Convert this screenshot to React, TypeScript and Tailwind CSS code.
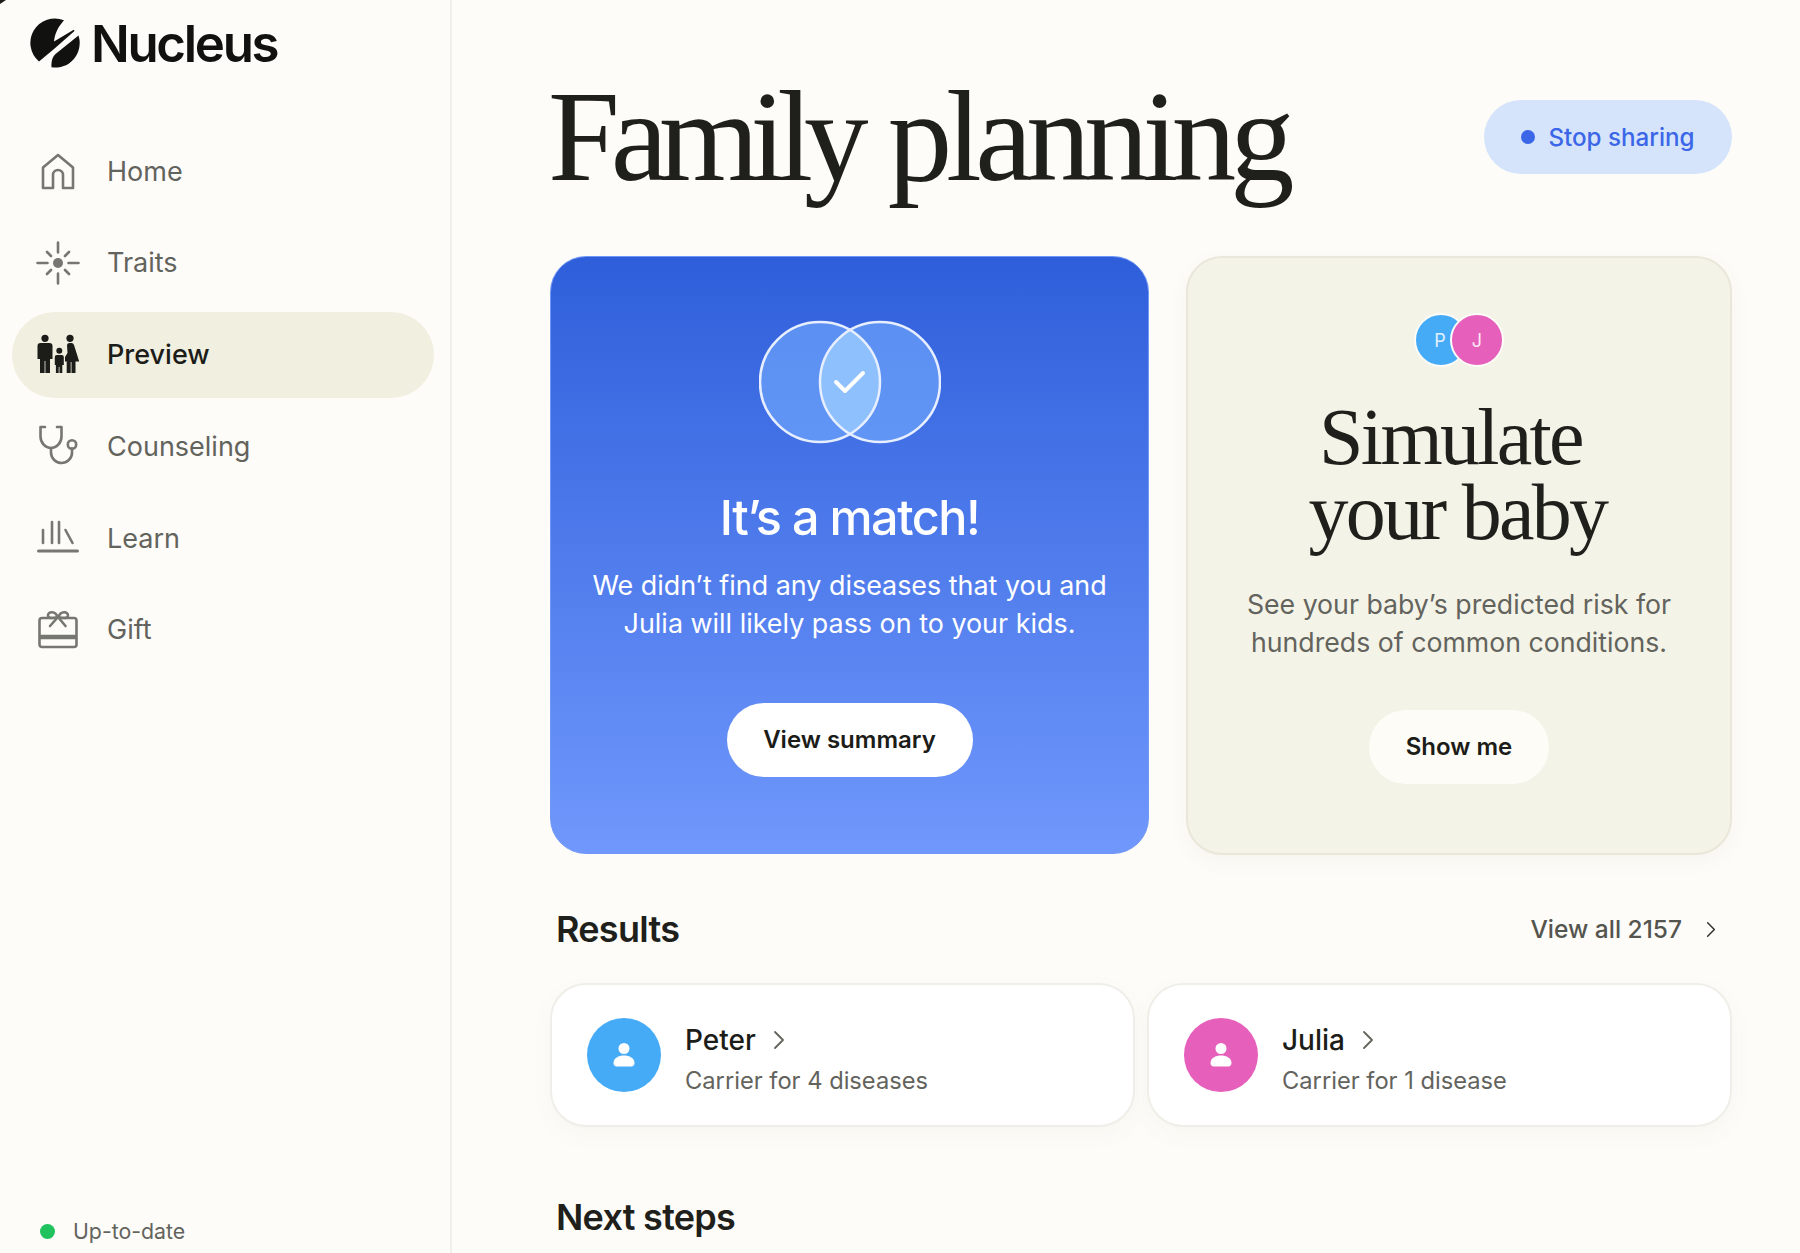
import type { ReactNode } from "react";

const stroke = {
  fill: "none",
  stroke: "currentColor",
  strokeWidth: 2.6,
  strokeLinecap: "round" as const,
  strokeLinejoin: "round" as const,
};

function HomeIcon() {
  return (
    <svg width="44" height="44" viewBox="0 0 44 44" {...stroke}>
      <path d="M7 39V18.500L22 6l15 12.500V39H27V26a5 5 0 0 0-10 0v13Z" />
    </svg>
  );
}

function TraitsIcon() {
  return (
    <svg width="44" height="44" viewBox="0 0 44 44" {...stroke}>
      <circle cx="22" cy="22" r="5" fill="currentColor" stroke="none" />
      <path d="M22 1.500v10M22 32.500v10M1.500 22h10M32.500 22h10M11 11l4 4M33 11l-4 4M11 33l4-4M33 33l-4-4" />
    </svg>
  );
}

function PreviewIcon() {
  return (
    <svg width="44" height="44" viewBox="0 0 44 44" fill="currentColor">
      <circle cx="9" cy="5.300" r="3.600" />
      <circle cx="34" cy="5.300" r="3.600" />
      <circle cx="23.300" cy="17.700" r="3" />
      <path d="M1.500 13a3 3 0 0 1 3-3h9a3 3 0 0 1 3 3v13h-2.500v14H9.400V28h-.8v12H4V26H1.500Z" />
      <path d="M18.800 24a2 2 0 0 1 2-2h5a2 2 0 0 1 2 2v8h-1.500v8h-2.800v-6h-.8v6h-2.800v-8h-1.100Z" />
      <path d="M31 12a2.500 2.500 0 0 1 2.500-2h2a3 3 0 0 1 2.500 2l5.200 16.500h-3.700V40h-4V29h-.8v11h-4V28.500H29V24l2.500-4Z" />
    </svg>
  );
}

function CounselingIcon() {
  return (
    <svg width="44" height="44" viewBox="0 0 44 44" {...stroke}>
      <path d="M9 3H4.500v9.500C4.500 19 9.500 24 15 24s10.500-5 10.500-11.500V3H21" />
      <path d="M15 24v4.500C15 34.500 20 39 25.500 39S36 34.500 36 29v-4.500" />
      <circle cx="36" cy="20.500" r="4.200" />
    </svg>
  );
}

function LearnIcon() {
  return (
    <svg width="44" height="44" viewBox="0 0 44 44" {...stroke}>
      <path d="M7 14v13M16 6v21M23 6v21M29.500 14l7 13" />
      <path d="M2.500 35h39" strokeWidth="3" />
    </svg>
  );
}

function GiftIcon() {
  return (
    <svg width="44" height="44" viewBox="0 0 44 44" {...stroke}>
      <rect x="3.500" y="10" width="37" height="29" rx="2.500" />
      <path d="M3.500 29h37" strokeWidth="4.500" strokeLinecap="butt" />
      <path d="M14 18l8-9 7.500 9M21.500 9c-2-6-9.500-6-9.500-1.500 0 3 4 2.800 9.500 1.500M22.500 9c2-6 9.500-6 9.500-1.500 0 3-4 2.800-9.500 1.500" fill="#fdfcf8" />
    </svg>
  );
}

function NavItem({ icon, label, active }: { icon: ReactNode; label: string; active?: boolean }) {
  return (
    <div
      className={`flex h-[86px] items-center rounded-full pl-[24px] ${active ? "bg-[#f0efe0] font-medium text-[#1c1c18]" : "text-[#63635d]"}`}
    >
      <span className={`flex w-[71px] shrink-0 ${active ? "" : "text-[#777771]"}`}>{icon}</span>
      <span className="text-[27px] leading-none">{label}</span>
    </div>
  );
}

function Chevron({ className }: { className: string }) {
  return (
    <svg className={className} viewBox="0 0 12 20" fill="none" stroke="currentColor" strokeWidth="1.800" strokeLinecap="round" strokeLinejoin="round">
      <path d="M2 2l8 8-8 8" />
    </svg>
  );
}

function PersonCard({ name, note, color }: { name: string; note: string; color: string }) {
  return (
    <div className="flex h-[144px] flex-1 items-center rounded-[36px] border-2 border-[#efeee8] bg-white pl-[35px] shadow-[0_8px_24px_rgba(90,90,70,0.04)]">
      <div className={`flex h-[74px] w-[74px] items-center justify-center rounded-full ${color}`}>
        <svg width="30" height="30" viewBox="0 0 30 30" fill="white">
          <circle cx="15" cy="8.500" r="5.500" />
          <path d="M4.500 23c0-5 5-7.500 10.500-7.500S25.500 18 25.500 23c0 2-1.500 3.500-3 3.500h-15c-1.500 0-3-1.500-3-3.500Z" />
        </svg>
      </div>
      <div className="ml-[24px] mt-[10px]">
        <div className="flex items-center text-[#1c1c18]">
          <span className="text-[28px] font-medium leading-[36px]">{name}</span>
          <Chevron className="ml-[17px] h-[22px] w-[12px] text-[#63635d]" />
        </div>
        <div className="mt-[5px] text-[23.7px] leading-[36px] text-[#63635d]">{note}</div>
      </div>
    </div>
  );
}

export default function App() {
  return (
    <div className="relative flex h-[1253px] overflow-hidden bg-[#fdfcf8] font-['Inter',sans-serif]">
      <svg className="absolute left-0 top-0" width="6" height="5" viewBox="0 0 6 5" fill="#1c1c18">
        <path d="M0 0h6L0 4Z" />
      </svg>
      <aside className="flex w-[452px] shrink-0 flex-col border-r-2 border-[#f0efea] pl-[12px] pr-[16px]">
        <div className="flex h-[85px] items-center pl-[18px] pt-[1px] text-[#11110f]">
          <svg width="50" height="50" viewBox="0 0 50 50" fill="currentColor">
            <path d="M34 2.200A24.500 24.500 0 0 0 9 43.600L24 31 44.500 13l-.8-1.300L24 23.500C25 14 29 8 34 2.200Z" />
            <path d="M48.500 17.500A24.500 24.500 0 0 1 21.500 49.300C21 43 22.500 39 25.500 36Z" />
          </svg>
          <span className="ml-[11px] text-[51px] font-semibold leading-none tracking-[-2.300px]">Nucleus</span>
        </div>
        <nav className="mt-[43px] flex flex-col gap-[5.800px]">
          <NavItem icon={<HomeIcon />} label="Home" />
          <NavItem icon={<TraitsIcon />} label="Traits" />
          <NavItem icon={<PreviewIcon />} label="Preview" active />
          <NavItem icon={<CounselingIcon />} label="Counseling" />
          <NavItem icon={<LearnIcon />} label="Learn" />
          <NavItem icon={<GiftIcon />} label="Gift" />
        </nav>
        <div className="mt-auto mb-[8px] flex items-center pl-[28px] text-[21.300px] leading-[28px] text-[#63635d]">
          <span className="mr-[18px] h-[15px] w-[15px] rounded-full bg-[#1fc25c]" />
          Up-to-date
        </div>
      </aside>

      <main className="flex-1 pl-[98px] pr-[68px]">
        <header className="flex h-[256px] items-start justify-between">
          <h1 className="-ml-[2px] pt-[62px] font-['Liberation_Serif',serif] text-[129px] leading-[150px] text-[#1f1f1b] [word-spacing:5px]">
            <span className="tracking-[-9px]">Family </span>
            <span className="tracking-[-6.400px]">planning</span>
          </h1>
          <button className="mt-[100px] flex h-[74px] w-[248px] items-center justify-center rounded-full bg-[#d5e4fb] text-[24.200px] font-medium text-[#3b66e8]">
            <span className="mr-[13px] h-[14px] w-[14px] rounded-full bg-[#3b66e8]" />
            <span className="pt-[3px]">Stop sharing</span>
          </button>
        </header>

        <section className="flex items-start gap-[37px]">
          <div className="flex h-[598px] w-[599px] flex-col items-center rounded-[36px] border border-[#6f97f5] bg-gradient-to-b from-[#2f5edb] to-[#7098fc] pt-[63px] text-white">
            <svg width="182" height="124" viewBox="0 0 182 124">
              <circle cx="61" cy="62" r="60" fill="#74aeff" fillOpacity="0.6" />
              <circle cx="121" cy="62" r="60" fill="#74aeff" fillOpacity="0.6" />
              <path d="M91 10a60 60 0 0 1 0 104a60 60 0 0 1 0-104Z" fill="#93c5fd" fillOpacity="0.85" />
              <circle cx="61" cy="62" r="60" fill="none" stroke="#e6eeff" strokeWidth="2.500" />
              <circle cx="121" cy="62" r="60" fill="none" stroke="#e6eeff" strokeWidth="2.500" />
              <path d="M77 62l9 9 18-18" fill="none" stroke="white" strokeWidth="4" strokeLinecap="round" strokeLinejoin="round" />
            </svg>
            <h2 className="mt-[44px] text-[48.500px] font-medium leading-[60px] tracking-[-0.03em]">It’s a match!</h2>
            <p className="mt-[18px] text-center text-[26.900px] leading-[38px]">
              We didn’t find any diseases that you and
              <br />
              Julia will likely pass on to your kids.
            </p>
            <button className="mt-[61px] h-[74px] w-[246px] rounded-full bg-white text-[24px] font-semibold text-[#1c1c18]">
              View summary
            </button>
          </div>

          <div className="flex h-[599px] flex-1 flex-col items-center rounded-[36px] border-2 border-[#e8e7da] bg-[#f4f3e7] pt-[55px] shadow-[0_6px_20px_rgba(90,90,70,0.05)]">
            <div className="flex">
              <span className="flex h-[54px] w-[54px] items-center justify-center rounded-full border-2 border-[#fdfcf8] bg-[#46abf6] pr-[2px] text-[18px] text-[#e3f1fd]">P</span>
              <span className="-ml-[18px] flex h-[54px] w-[54px] items-center justify-center rounded-full border-2 border-[#fdfcf8] bg-[#e55fbb] text-[18px] text-[#fde8f5]">J</span>
            </div>
            <h2 className="mt-[33px] pr-[3px] text-center font-['Liberation_Serif',serif] text-[80px] leading-[75px] tracking-[-2.700px] text-[#1f1f1b]">
              <span className="pr-[14px]">Simulate</span>
              <br />
              your baby
            </h2>
            <p className="mt-[35px] text-center text-[26.700px] leading-[38px] text-[#63635d]">
              See your baby’s predicted risk for
              <br />
              hundreds of common conditions.
            </p>
            <button className="mt-[49px] h-[74px] w-[180px] rounded-full bg-[#fdfcf7] text-[24px] font-semibold text-[#1c1c18]">
              Show me
            </button>
          </div>
        </section>

        <section className="mt-[49px] flex h-[50px] items-center justify-between pl-[6px] pr-[16px]">
          <h3 className="text-[36px] font-semibold tracking-[-0.02em] text-[#1f1f1b]">Results</h3>
          <div className="flex items-center text-[24.500px] font-medium text-[#55554f]">
            View all 2157
            <Chevron className="ml-[24px] h-[17px] w-[10px] text-[#33332e]" />
          </div>
        </section>

        <section className="mt-[29px] flex gap-[12px]">
          <PersonCard name="Peter" note="Carrier for 4 diseases" color="bg-[#46abf6]" />
          <PersonCard name="Julia" note="Carrier for 1 disease" color="bg-[#e55fbb]" />
        </section>

        <h3 className="mt-[68px] pl-[6px] text-[36px] font-semibold leading-[44px] tracking-[-0.02em] text-[#1f1f1b]">
          Next steps
        </h3>
      </main>
    </div>
  );
}
